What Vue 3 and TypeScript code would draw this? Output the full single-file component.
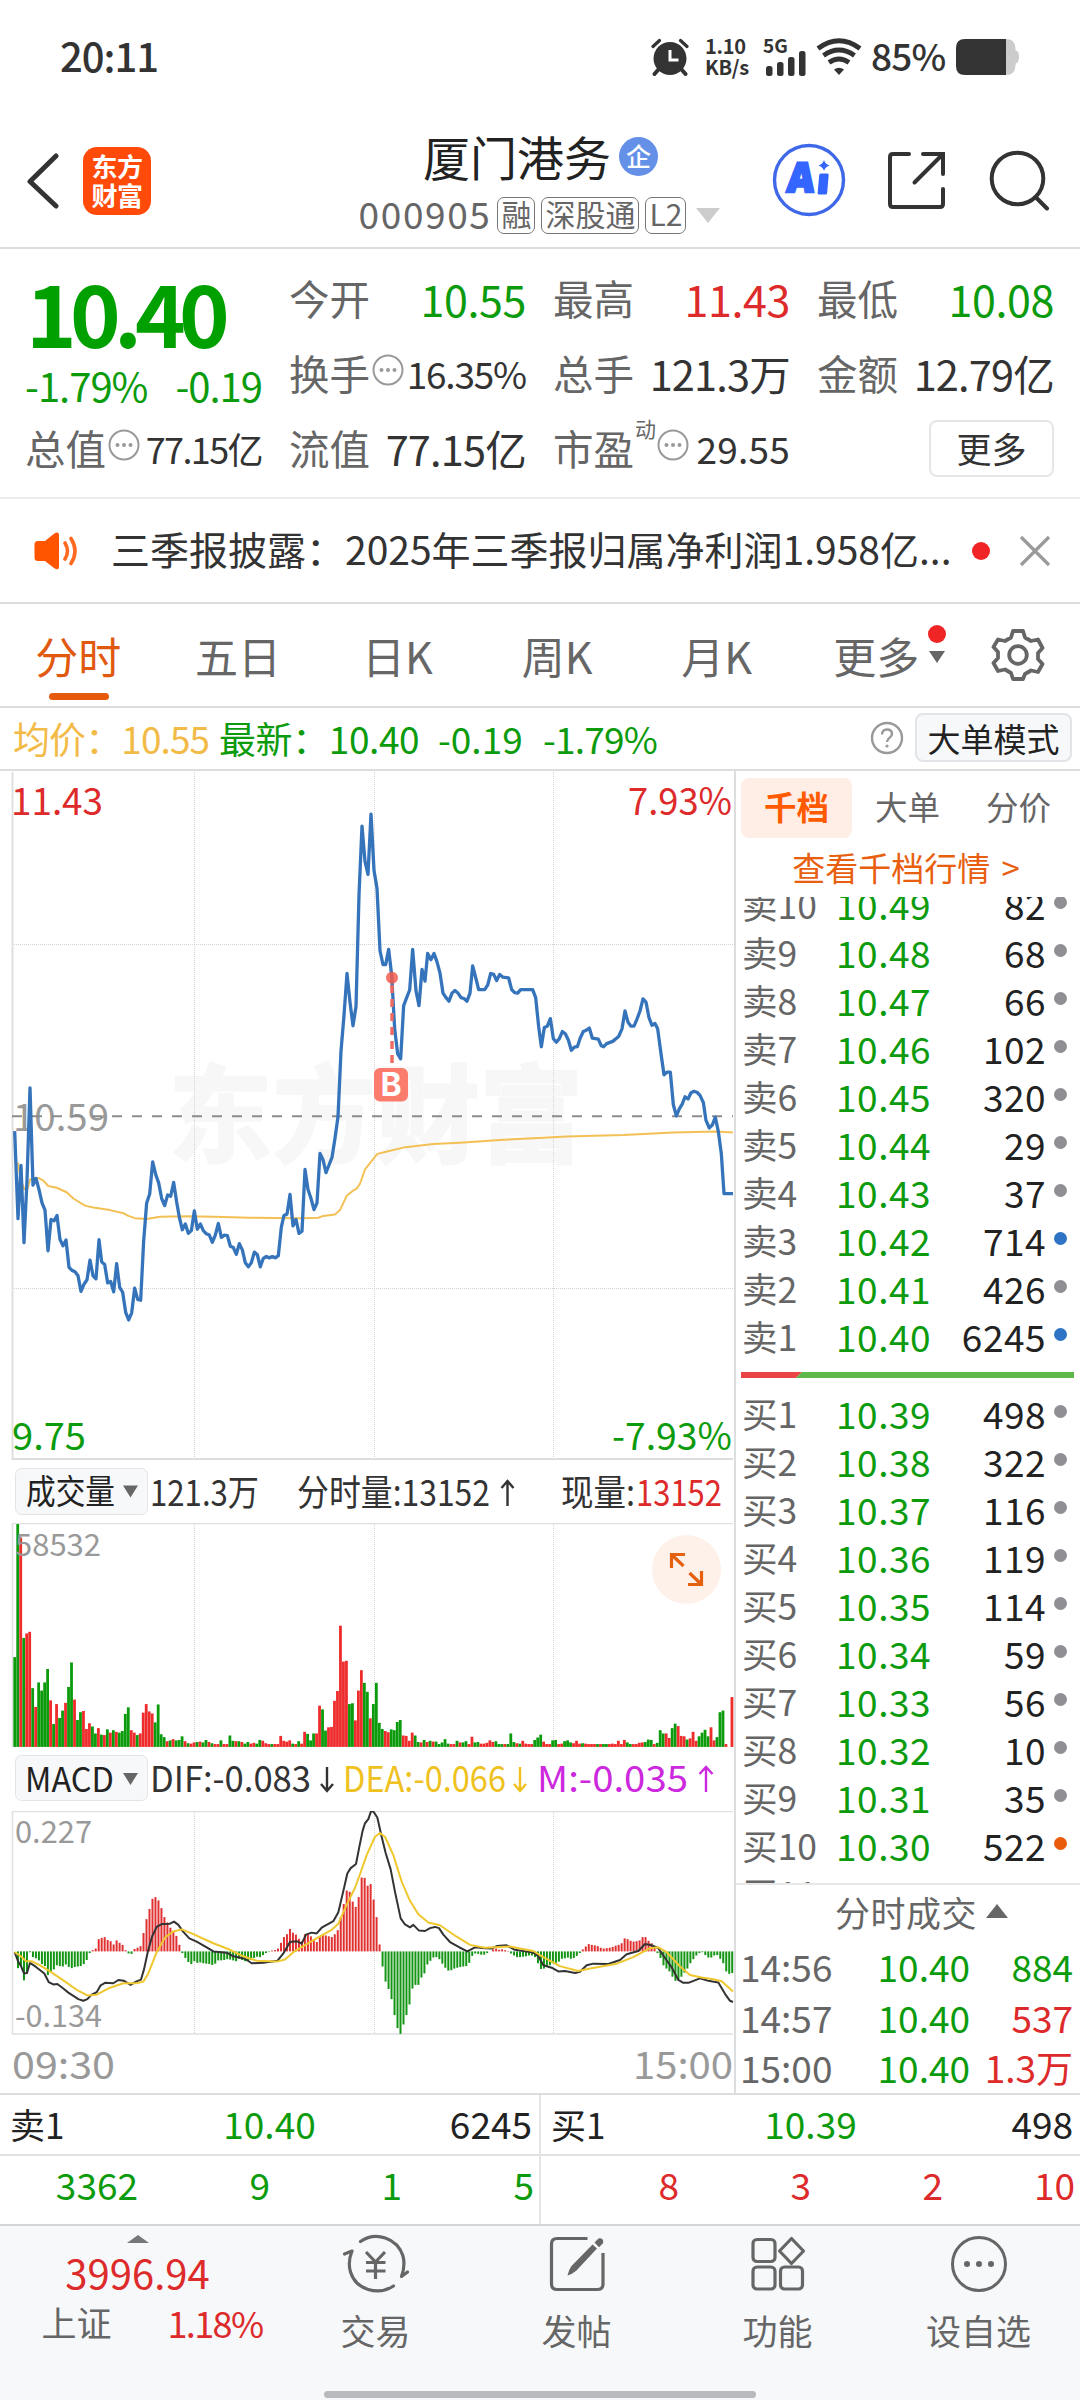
<script setup lang="ts">
interface Level { name: string; price: string; qty: string; dot: 'gray' | 'blue' | 'orange' }

const level = (name: string, price: string, qty: string, dot: Level['dot'] = 'gray'): Level => ({ name, price, qty, dot })

const asks: Level[] = [
  level('卖10', '10.49', '82'), level('卖9', '10.48', '68'), level('卖8', '10.47', '66'),
  level('卖7', '10.46', '102'), level('卖6', '10.45', '320'), level('卖5', '10.44', '29'),
  level('卖4', '10.43', '37'), level('卖3', '10.42', '714', 'blue'), level('卖2', '10.41', '426'),
  level('卖1', '10.40', '6245', 'blue'),
]
const bids: Level[] = [
  level('买1', '10.39', '498'), level('买2', '10.38', '322'), level('买3', '10.37', '116'),
  level('买4', '10.36', '119'), level('买5', '10.35', '114'), level('买6', '10.34', '59'),
  level('买7', '10.33', '56'), level('买8', '10.32', '10'), level('买9', '10.31', '35'),
  level('买10', '10.30', '522', 'orange'), level('买11', '10.29', '407'),
]
const ticks = [
  { time: '14:56', price: '10.40', qty: '884', cls: 'green' },
  { time: '14:57', price: '10.40', qty: '537', cls: 'red' },
  { time: '15:00', price: '10.40', qty: '1.3万', cls: 'red' },
]
const tabs = ['分时', '五日', '日K', '周K', '月K', '更多']
const askQueue = ['3362', '9', '1', '5']
const bidQueue = ['8', '3', '2', '10']

// Joins the morning and afternoon halves; the afternoon half is offset by 1080 units.
const join = (am: string, pm: string): string =>
  am + ' ' + pm.split(' ').map(p => { const [x, y] = p.split(','); return `${Number(x) + 1080},${y}` }).join(' ')

const pricePts = join(
  '44,829 54,1025 63,906 72,1079 81,940 90,732 99,950 108,935 117,960 126,990 135,1006 144,1097 153,1027 162,1030 171,1018 180,1072 189,1086 198,1073 207,1134 216,1141 225,1144 234,1153 243,1188 252,1172 261,1162 270,1118 279,1153 288,1160 297,1072 305,1122 314,1128 323,1169 332,1166 341,1189 350,1126 359,1179 368,1190 377,1235 386,1252 395,1236 404,1181 413,1206 422,1208 431,1075 440,990 449,970 458,898 467,926 476,945 485,980 494,996 503,972 512,975 521,944 530,988 538,1022 547,1050 556,1037 565,1058 574,1052 583,1008 592,1049 601,1037 610,1052 619,1059 628,1062 637,1078 646,1062 655,1036 664,1067 673,1062 682,1063 691,1087 700,1090 709,1105 718,1081 727,1095 736,1124 745,1133 754,1124 763,1100 772,1106 781,1133 790,1114 799,1110 808,1113 817,1110 826,1113 835,1108 844,1044 852,1018 861,1015 870,971 879,1041 888,1027 897,1058 906,1053 915,915 924,960 933,980 942,1005 951,990 960,879 969,893 978,922 987,905 996,888 1005,845 1014,797 1023,650 1032,570 1041,476 1050,540 1059,593 1068,550 1077,300 1086,146 1095,225 1104,254',
  '33,119 42,245 51,285 60,425 69,456 77,456 86,422 95,480 104,600 113,656 122,667 131,548 140,530 149,513 158,422 168,515 177,548 186,467 195,493 203,431 213,445 222,431 231,450 240,475 249,520 258,530 267,538 276,520 285,514 294,520 303,530 312,532 321,538 330,520 338,459 347,485 356,512 374,512 383,502 392,476 401,478 410,492 419,478 428,484 446,486 455,512 464,519 473,520 482,512 518,512 527,530 536,595 544,640 553,597 562,594 571,577 580,622 589,630 598,622 607,606 616,611 625,625 634,648 643,641 652,640 661,620 670,606 679,603 688,598 697,621 715,623 724,638 731,640 740,633 758,628 776,617 786,600 795,560 804,585 813,594 822,594 831,578 840,560 849,533 858,540 867,575 876,592 885,588 893,600 902,650 912,703 921,697 931,697 940,770 949,795 958,779 967,768 975,752 984,757 993,743 1002,740 1011,742 1020,749 1030,765 1038,805 1048,822 1057,815 1066,798 1075,830 1084,880 1092,969 1119,969')
const avgPts = join(
  '54,900 63,940 72,958 81,962 90,938 100,934 115,934 130,940 145,952 170,956 200,966 220,980 255,996 280,1000 330,1006 370,1013 385,1019 405,1024 440,1026 480,1021 560,1020 640,1021 750,1023 900,1024 955,1023 970,1019 1005,1016 1020,1006 1040,974 1058,963 1070,958',
  '0,947 15,915 33,898 52,880 75,876 130,866 220,858 300,855 420,849 520,845 620,841 790,838 940,832 1070,830 1119,832')
const difPts = join(
  '44,1228 54,1250 63,1262 72,1280 81,1279 90,1254 108,1264 133,1280 146,1301 160,1307 172,1306 190,1317 205,1327 220,1335 235,1343 250,1347 262,1343 275,1332 290,1326 302,1309 315,1303 340,1304 355,1296 372,1298 392,1308 408,1300 423,1295 432,1270 444,1225 456,1190 470,1166 485,1159 510,1158 522,1153 535,1161 550,1178 568,1194 590,1202 620,1216 640,1226 680,1229 700,1238 735,1244 755,1255 790,1254 832,1249 850,1231 870,1203 890,1201 905,1207 918,1185 935,1180 950,1182 965,1168 1000,1152 1015,1130 1028,1085 1042,1035 1052,1022 1068,1012 1078,970',
  '8,930 15,912 25,902 33,883 40,883 52,898 65,945 77,985 92,1025 105,1080 122,1145 135,1160 150,1167 160,1161 177,1175 195,1176 210,1169 225,1166 237,1169 250,1185 270,1203 300,1217 322,1226 345,1216 375,1218 395,1219 410,1213 440,1211 465,1222 520,1229 535,1238 550,1260 575,1266 595,1275 615,1274 645,1279 660,1276 680,1260 700,1256 745,1257 780,1247 800,1233 835,1225 855,1208 875,1211 895,1218 915,1242 935,1265 955,1296 970,1303 985,1303 1020,1292 1045,1298 1075,1302 1095,1330 1110,1347 1119,1350')
const deaPts = join(
  '44,1228 60,1236 78,1250 95,1250 120,1260 150,1275 190,1297 230,1320 262,1334 290,1332 330,1315 370,1304 410,1304 430,1300 445,1280 470,1228 495,1192 520,1177 545,1172 575,1182 640,1206 690,1222 730,1238 770,1249 830,1251 855,1246 880,1228 920,1208 960,1189 995,1173 1015,1158 1040,1112 1065,1070',
  '0,1037 20,990 45,945 60,936 75,945 100,990 125,1055 150,1102 175,1135 205,1155 240,1162 290,1190 330,1210 375,1217 450,1214 480,1219 520,1225 550,1240 600,1262 655,1274 690,1268 770,1256 820,1240 870,1218 895,1216 920,1228 960,1263 990,1284 1025,1290 1060,1294 1085,1299 1119,1324')

// One entry per trading minute: direction and top edge of the bar.
const volumes = ('g505 g179 r212 g458 r447 r443 g581 r627 g567 g587 g567 g534 r611 g669 r620 g654 g636 r617 g578 g518 r609 g659 g640 r637 r681 r667 g675 g692 r679 g695 r696 g682 r690 g684 r688 g690 g686 g644 g628 r684 r690 g696 r692 r641 r620 r638 r643 g665 g621 g694 g701 r711 g709 r706 g709 g708 g699 r711 g716 r717 r714 g713 r712 g714 g708 r713 g716 r718 r718 g709 r718 r718 g697 g710 r711 g711 r713 g717 g713 r717 r715 g717 g708 r710 r716 r718 g718 r718 r718 r698 r710 r712 r709 g717 r718 g711 r717 r688 g693 g709 g692 r692 r624 g633 g685 r677 r676 r612 r588 r428 r516 r514 g620 g618 r660 r587 r537 g568 g590 r655 g620 g568 g666 g681 r686 r689 g682 g684 g664 g659 r697 r698 r710 r690 g697 g713 r714 g708 r713 g710 r712 g712 g718 g714 g706 g717 r718 r718 g710 r714 g714 g711 r718 r700 g714 g713 r717 r717 r715 r709 r713 g711 g718 g718 r718 g718 g692 g713 r716 g717 r710 r717 r718 r718 g708 g702 g695 r712 r718 r718 g709 g708 r718 r717 g711 g709 g714 r716 r710 r717 g716 r717 r718 r718 r718 g718 r718 g718 g718 r718 r717 r718 r710 r718 r708 g714 g718 r718 r718 r715 r714 g713 g707 g708 r718 g715 g684 g692 r692 r703 g679 g668 r674 r698 r699 g707 r704 r688 r710 g699 g690 g683 g699 r677 r709 g701 g640 g636 r718 g725 r603')
  .split(' ').map((s, i) => ({ up: s[0] === 'r', x: 40 + i * 8.965, y: Number(s.slice(1)) }))

const macd = ('1267 1262 1297 1280 1228 1240 1243 1248 1257 1262 1284 1277 1270 1260 1262 1263 1258 1264 1267 1264 1263 1262 1257 1247 1230 1223 1219 1196 1193 1191 1198 1201 1209 1199 1205 1210 1223 1231 1232 1220 1217 1213 1181 1147 1122 1097 1093 1101 1120 1142 1155 1168 1177 1188 1210 1230 1242 1252 1257 1250 1254 1253 1255 1256 1257 1259 1256 1248 1248 1247 1245 1246 1248 1250 1244 1247 1250 1250 1247 1242 1239 1240 1235 1230 1227 1224 1223 1219 1205 1191 1184 1171 1180 1185 1195 1201 1184 1184 1189 1197 1203 1189 1185 1187 1189 1191 1184 1174 1142 1110 1077 1080 1104 1117 1093 1045 1046 1065 1061 1099 1142 1209 1263 1300 1318 1343 1382 1414 1428 1405 1382 1356 1317 1308 1308 1290 1280 1258 1249 1241 1240 1245 1256 1266 1273 1272 1268 1266 1264 1263 1262 1254 1237 1231 1232 1234 1234 1230 1226 1221 1219 1222 1221 1223 1225 1231 1236 1240 1240 1239 1238 1236 1236 1240 1255 1269 1268 1262 1260 1255 1254 1251 1244 1243 1241 1244 1242 1237 1230 1221 1214 1208 1210 1211 1213 1217 1219 1218 1217 1215 1212 1210 1206 1194 1196 1200 1202 1201 1199 1191 1191 1200 1206 1213 1230 1242 1260 1268 1275 1288 1298 1294 1288 1278 1268 1255 1245 1236 1230 1228 1235 1241 1241 1236 1235 1244 1255 1275 1281 1279')
  .split(' ').map((s, i) => {
    const v = Number(s)
    return { up: v < 1226, x: 51 + i * 8.965, y: Math.min(v, 1226), h: Math.abs(v - 1226) }
  })
</script>

<template>
  <div class="screen">
    <header class="status">
      <span class="clock">20:11</span>
      <svg class="s-alarm" width="38" height="38" viewBox="0 0 38 38">
        <circle cx="19" cy="20.5" r="16.5" fill="#333" />
        <path d="M2 8.500l6.500-6M36 8.500l-6.500-6" stroke="#333" stroke-width="3.200" stroke-linecap="round" />
        <path d="M7 32l-3.500 4M31 32l3.500 4" stroke="#333" stroke-width="4" stroke-linecap="round" />
        <path d="M19 12v10h8.500" fill="none" stroke="#fff" stroke-width="3" />
      </svg>
      <span class="speed">1.10<br />KB/s</span>
      <span class="cell">
        <b>5G</b>
        <svg width="41" height="25" viewBox="0 0 41 25" fill="#333">
          <rect x="0" y="15" width="6.500" height="10" rx="2.500" /><rect x="11" y="11" width="6.500" height="14" rx="2.500" />
          <rect x="22" y="6" width="6.500" height="19" rx="2.500" /><rect x="33" y="0" width="6.500" height="25" rx="2.500" />
        </svg>
      </span>
      <svg class="s-wifi" width="46" height="38" viewBox="0 0 46 38" fill="none" stroke="#333" stroke-width="4.800">
        <path d="M2 10.500Q23-5 44 10.500M7.500 17.500Q23 6.500 38.500 17.500M13 24.500Q23 17.500 33 24.500" />
        <path d="M18 31.500q5-3.500 10 0l-5 5.500z" fill="#333" stroke="none" />
      </svg>
      <span class="pct">85%</span>
      <svg width="64" height="36" viewBox="0 0 64 36">
        <path d="M9 0H50q9 0 9.500 9v2.500q3.500.5 3.500 6.500t-3.500 6.500V27q-.5 9-9.500 9H9z" fill="#ccc" />
        <path d="M9 0H50V36H9q-9 0-9-9V9q0-9 9-9z" fill="#333" />
      </svg>
    </header>

    <nav class="titlebar">
      <div class="t-left">
        <svg width="34" height="56" viewBox="0 0 34 56"><path d="M30 3L4 28.500 30 53" fill="none" stroke="#333" stroke-width="5" stroke-linecap="round" stroke-linejoin="round" /></svg>
        <div class="brand"><span>东方</span><span>财富</span></div>
      </div>
      <div class="t-mid">
        <div class="name">厦门港务<i>企</i></div>
        <div class="code"><span>000905</span><em>融</em><em>深股通</em><em>L2</em>
          <svg width="24" height="15" viewBox="0 0 24 15"><path d="M0 0h24L12 15z" fill="#ccc" /></svg>
        </div>
      </div>
      <div class="t-right">
        <svg width="74" height="74" viewBox="0 0 74 74">
          <circle cx="37" cy="37" r="34.500" fill="none" stroke="#3f68e8" stroke-width="3.400" />
          <g transform="translate(4.500 0) skewX(-5)" fill="#3466ff">
            <text x="14" y="49.500" class="ai" textLength="27" lengthAdjust="spacingAndGlyphs">A</text>
            <rect x="45.500" y="30.500" width="9.500" height="21" rx="1.500" />
          </g>
          <path d="M52 17q1.300 4.300 5.700 5.500-4.400 1.200-5.700 5.500-1.300-4.300-5.700-5.500 4.400-1.200 5.700-5.500z" fill="#3466ff" />
        </svg>
        <svg width="59" height="59" viewBox="0 0 59 59" fill="none" stroke="#333" stroke-width="4" stroke-linecap="round">
          <path d="M22 3H6Q3 3 3 6V53q0 3 3 3H53q3 0 3-3V38M36 3H56V23M55 4L27.500 31.500" />
        </svg>
        <svg width="61" height="61" viewBox="0 0 61 61" fill="none" stroke="#333" stroke-width="4" stroke-linecap="round">
          <circle cx="28.500" cy="28.500" r="25.800" /><path d="M46.500 47L58 58.500" />
        </svg>
      </div>
    </nav>

    <section class="quote">
      <div class="last">
        <strong>10.40</strong>
        <div><span>-1.79%</span><span>-0.19</span></div>
      </div>
      <div class="q"><label>今开</label><span class="v green">10.55</span></div>
      <div class="q"><label>最高</label><span class="v red">11.43</span></div>
      <div class="q"><label>最低</label><span class="v green">10.08</span></div>
      <div class="q"><label>换手</label><svg class="dots" width="32" height="32" viewBox="0 0 32 32"><circle cx="16" cy="16" r="14.500" fill="none" stroke="#999" stroke-width="2" /><g fill="#999"><circle cx="9.500" cy="16" r="2" /><circle cx="16" cy="16" r="2" /><circle cx="22.500" cy="16" r="2" /></g></svg><span class="v sm">16.35%</span></div>
      <div class="q"><label>总手</label><span class="v md">121.3万</span></div>
      <div class="q"><label>金额</label><span class="v md">12.79亿</span></div>
      <div class="q"><label>总值</label><svg class="dots" width="32" height="32" viewBox="0 0 32 32"><circle cx="16" cy="16" r="14.500" fill="none" stroke="#999" stroke-width="2" /><g fill="#999"><circle cx="9.500" cy="16" r="2" /><circle cx="16" cy="16" r="2" /><circle cx="22.500" cy="16" r="2" /></g></svg><span class="v xs">77.15亿</span></div>
      <div class="q"><label>流值</label><span class="v md">77.15亿</span></div>
      <div class="q"><label>市盈</label><sup>动</sup><svg class="dots" width="32" height="32" viewBox="0 0 32 32"><circle cx="16" cy="16" r="14.500" fill="none" stroke="#999" stroke-width="2" /><g fill="#999"><circle cx="9.500" cy="16" r="2" /><circle cx="16" cy="16" r="2" /><circle cx="22.500" cy="16" r="2" /></g></svg><span class="v pe">29.55</span></div>
      <div class="q"><button class="more">更多</button></div>
    </section>

    <section class="notice">
      <svg width="46" height="38" viewBox="0 0 46 38">
        <path d="M4 9h7L20 1.800q5-3.300 5 2V34q0 5.500-5 2L11 29H4q-3.500 0-3.500-3.500v-13Q.5 9 4 9z" fill="#ff5500" />
        <path d="M31 11q5 8 0 16M37 6.500q8 12.500 0 25" fill="none" stroke="#ff6a20" stroke-width="3.600" stroke-linecap="round" />
      </svg>
      <p>三季报披露：2025年三季报归属净利润1.958亿...</p>
      <i class="reddot"></i>
      <svg width="32" height="32" viewBox="0 0 32 32"><path d="M2 2L30 30M30 2L2 30" stroke="#999" stroke-width="3.200" /></svg>
    </section>

    <nav class="tabs">
      <div v-for="(t, i) in tabs" :key="t" class="tab" :class="{ on: i === 0 }">
        <span>{{ t }}</span>
        <span v-if="i === 5" class="flag">
          <i class="reddot"></i><svg width="16" height="12" viewBox="0 0 16 12"><path d="M0 0h16L8 12z" fill="#666" /></svg>
        </span>
      </div>
      <svg class="gear" width="54" height="54" viewBox="0 0 54 54" fill="none" stroke="#666" stroke-width="3.800" stroke-linejoin="round">
        <path d="M22 3h10l2 6.500 6 3.500 7-1.500 4.500 8.500-4.500 5v6l4.500 5-4.500 8-7-1.500-6 3.500L32 51H22l-2-6-6-3.500L7 43l-4.500-8L7 30v-6l-4.500-5L7 11.500 14 13l6-3.500z" />
        <circle cx="27" cy="27" r="8.800" />
      </svg>
    </nav>

    <div class="strip">
      <span class="avg">均价：<b>10.55</b></span>
      <span class="green newest">最新：<b>10.40</b></span>
      <span class="green chg">-0.19</span><span class="green chg2">-1.79%</span>
      <svg width="34" height="34" viewBox="0 0 34 34"><circle cx="17" cy="17" r="15" fill="none" stroke="#999" stroke-width="2.400" /><path d="M12 13.500q0-5 5-5t5 4.600c0 3.400-5 3.800-5 8" fill="none" stroke="#999" stroke-width="2.400" /><circle cx="17" cy="25" r="1.600" fill="#999" /></svg>
      <button>大单模式</button>
    </div>

    <main class="body">
      <div class="charts">
        <svg width="734" height="689" viewBox="0 770 734 689">
          <text x="169" y="1153" class="wm" textLength="414" lengthAdjust="spacingAndGlyphs">东方财富</text>
          <g stroke="#d4d4d4" stroke-width="1" stroke-dasharray="1 1">
            <path d="M194.500 771V1458M374.500 771V1458M553.500 771V1458M12 943.500H733M12 1287.500H733" fill="none" />
          </g>
          <path d="M12 1458H733M12.500 771V1459" stroke="#dcdddf" stroke-width="1.800" fill="none" />
          <g class="ax">
            <text x="13" y="1130" fill="#999" textLength="96" lengthAdjust="spacingAndGlyphs">10.59</text>
          </g>
          <path d="M12 1115.300H733" stroke="#8c8c8c" stroke-width="2" stroke-dasharray="10 10" />
          <g transform="translate(0 760) scale(.333333 .446429)" fill="none" stroke-linejoin="round">
            <polyline :points="avgPts" stroke="#f3c055" stroke-width="2" vector-effect="non-scaling-stroke" />
            <polyline :points="pricePts" stroke="#3574bb" stroke-width="3.300" vector-effect="non-scaling-stroke" />
          </g>
          <path d="M392 984V1067" stroke="#f06a60" stroke-width="3.400" stroke-dasharray="8 6" />
          <circle cx="392" cy="976.700" r="6" fill="#f55a4e" opacity=".85" />
          <rect x="374" y="1067" width="34" height="33.500" rx="6" fill="#fb7b6c" />
          <text x="391" y="1095" class="mark" text-anchor="middle">B</text>
          <g class="ax">
            <text x="11" y="813.500" fill="#dd2a2a" textLength="92" lengthAdjust="spacingAndGlyphs">11.43</text>
            <text x="12" y="1448.500" fill="#0c9b0c" textLength="74" lengthAdjust="spacingAndGlyphs">9.75</text>
            <text x="628" y="813.500" fill="#dd2a2a" textLength="104" lengthAdjust="spacingAndGlyphs">7.93%</text>
            <text x="612" y="1448.500" fill="#0c9b0c" textLength="120" lengthAdjust="spacingAndGlyphs">-7.93%</text>
          </g>
        </svg>

        <svg width="734" height="63" viewBox="0 1459 734 63">
          <rect x="15.500" y="1467.500" width="132" height="46" rx="6" fill="#f7f8fa" stroke="#e2e4e8" />
          <path d="M123 1484.500h15l-7.500 12z" fill="#666" />
          <g class="lg">
            <text x="26" y="1503" class="chip" textLength="89" lengthAdjust="spacingAndGlyphs">成交量</text>
            <text x="150" y="1504.500" textLength="109" lengthAdjust="spacingAndGlyphs">121.3万</text>
            <text x="297" y="1504.500" textLength="193" lengthAdjust="spacingAndGlyphs">分时量:13152</text>
            <text x="561" y="1504.500" textLength="74" lengthAdjust="spacingAndGlyphs">现量:</text>
            <text x="636" y="1504.500" fill="#dd2a2a" textLength="86" lengthAdjust="spacingAndGlyphs">13152</text>
          </g>
          <path d="M507.500 1505V1480M501.500 1487l6-7 6 7" fill="none" stroke="#333" stroke-width="2.400" />
        </svg>

        <svg width="734" height="224" viewBox="0 1522 734 224">
          <path d="M12.500 1746V1522.500H733" fill="none" stroke="#dfe0e2" stroke-width="1.500" />
          <path d="M194.500 1523V1746M374.500 1523V1746M553.500 1523V1746" stroke="#d4d4d4" stroke-dasharray="1 1" />
          <g transform="translate(0 1450) scale(.333333 .408163)">
            <rect v-for="(b, i) in volumes" :key="i" :x="b.x" :y="b.y" width="8.400" :height="725 - b.y" :fill="b.up ? '#ee2c2c' : '#0c9b0c'" />
          </g>
          <text x="15" y="1554.500" class="sub" textLength="86" lengthAdjust="spacingAndGlyphs">58532</text>
          <circle cx="686.500" cy="1568.500" r="34.500" fill="#fef1ea" />
          <path d="M671.500 1567V1553.500H685M672 1554l11.500 11M688 1583.500h13.500V1570M701 1583l-11.500-11" fill="none" stroke="#e5600f" stroke-width="3.200" />
        </svg>

        <svg width="734" height="64" viewBox="0 1746 734 64">
          <rect x="15.500" y="1754.500" width="132" height="45" rx="6" fill="#f7f8fa" stroke="#e2e4e8" />
          <path d="M123 1772h15l-7.500 12z" fill="#666" />
          <g class="lg">
            <text x="25" y="1790.500" class="chip" textLength="89" lengthAdjust="spacingAndGlyphs">MACD</text>
            <text x="150" y="1790.500" textLength="161" lengthAdjust="spacingAndGlyphs">DIF:-0.083</text>
            <text x="343" y="1790.500" fill="#efc11f" textLength="163" lengthAdjust="spacingAndGlyphs">DEA:-0.066</text>
            <text x="537" y="1790.500" fill="#cc28dd" textLength="151" lengthAdjust="spacingAndGlyphs">M:-0.035</text>
          </g>
          <g fill="none" stroke-width="2.400">
            <path d="M327 1766V1790M321 1783l6 7 6-7" stroke="#333" />
            <path d="M520 1766V1790M514 1783l6 7 6-7" stroke="#efc11f" />
            <path d="M706 1791V1766M699.500 1773l6.500-7 6.500 7" stroke="#cc28dd" />
          </g>
        </svg>

        <svg width="734" height="284" viewBox="0 1810 734 284">
          <path d="M12.500 2033V1810.500H733M12 2033H733" fill="none" stroke="#dfe0e2" stroke-width="1.500" />
          <path d="M194.500 1811V2032M374.500 1811V2032M553.500 1811V2032" stroke="#d4d4d4" stroke-dasharray="1 1" />
          <g class="sub">
            <text x="15" y="1841.500" textLength="77" lengthAdjust="spacingAndGlyphs">0.227</text>
            <text x="15" y="2025.500" textLength="87" lengthAdjust="spacingAndGlyphs">-0.134</text>
          </g>
          <g transform="translate(0 1450) scale(.333333 .408163)" fill="none" stroke-linejoin="round">
            <rect v-for="(b, i) in macd" :key="i" :x="b.x" :y="b.y" width="6" :height="b.h" :fill="b.up ? '#e03030' : '#149614'" />
            <polyline :points="difPts" stroke="#333" stroke-width="2" vector-effect="non-scaling-stroke" />
            <polyline :points="deaPts" stroke="#efc72e" stroke-width="2" vector-effect="non-scaling-stroke" />
          </g>
          <g class="ax" fill="#999">
            <text x="12" y="2078" textLength="103" lengthAdjust="spacingAndGlyphs">09:30</text>
            <text x="633" y="2078" textLength="100" lengthAdjust="spacingAndGlyphs">15:00</text>
          </g>
        </svg>
      </div>

      <aside class="side">
        <div class="seg"><span class="on">千档</span><span>大单</span><span>分价</span></div>
        <div class="link">查看千档行情 &gt;</div>
        <div class="book">
          <div v-for="r in asks" :key="r.name" class="lv"><span>{{ r.name }}</span><span class="p">{{ r.price }}</span><span class="n">{{ r.qty }}</span><i :class="r.dot"></i></div>
          <svg class="ratio" width="333" height="6" viewBox="0 0 333 6"><path d="M0 0H61L55 6H0z" fill="#ea4444" /><path d="M61 0H333V6H55z" fill="#5cb848" /></svg>
          <div v-for="r in bids" :key="r.name" class="lv"><span>{{ r.name }}</span><span class="p">{{ r.price }}</span><span class="n">{{ r.qty }}</span><i :class="r.dot"></i></div>
        </div>
        <div class="thead">分时成交<svg width="22" height="14" viewBox="0 0 22 14"><path d="M0 14L11 0 22 14z" fill="#666" /></svg></div>
        <div v-for="t in ticks" :key="t.time" class="tick"><span>{{ t.time }}</span><span class="p">{{ t.price }}</span><span class="n" :class="t.cls">{{ t.qty }}</span></div>
      </aside>
    </main>

    <section class="best">
      <div class="half">
        <div class="top"><span>卖1</span><span class="green">10.40</span><span>6245</span></div>
        <div class="queue green"><span v-for="(q, i) in askQueue" :key="i">{{ q }}</span></div>
      </div>
      <div class="half">
        <div class="top"><span>买1</span><span class="green">10.39</span><span>498</span></div>
        <div class="queue red"><span v-for="(q, i) in bidQueue" :key="i">{{ q }}</span></div>
      </div>
    </section>

    <footer class="dock">
      <div class="dock-row">
        <div class="index">
          <svg width="22" height="8" viewBox="0 0 22 8"><path d="M0 8L11 0 22 8z" fill="#777" /></svg>
          <b>3996.94</b>
          <div><span>上证</span><em>1.18%</em></div>
        </div>
        <div class="item">
          <svg width="66" height="60" viewBox="0 0 66 60" fill="none" stroke="#666" stroke-width="3.200" stroke-linecap="round" stroke-linejoin="round">
            <path d="M17.500 7.500C33-3 54 4 60 22q2.500 10-1.500 20.500l6-4.500M50.500 52C35 62 13 56 7.500 38q-3-10 1.500-21L1.500 20" />
            <path d="M23 18l9.500 10L42 18M32.500 28V45M23 28.500H42.500M23 37H42.500" stroke-linecap="butt" />
          </svg>
          <span>交易</span>
        </div>
        <div class="item">
          <svg width="58" height="60" viewBox="0 0 58 60" fill="none" stroke="#666" stroke-width="3.200">
            <path d="M39.500 4.500H9Q3.500 4.500 3.500 10V50q0 5.500 5.500 5.500H49.500q5.500 0 5.500-5.500V19" />
            <path d="M44.500 10.500l4.500 4L28.500 36.500q-4 3.500-9 5 1-5.500 4-9.500zM46.500 8.500l4-4q2-1 4 .8 1.500 2 .5 4l-4 4z" fill="#666" stroke="none" />
          </svg>
          <span>发帖</span>
        </div>
        <div class="item">
          <svg width="56" height="60" viewBox="0 0 56 60" fill="none" stroke="#666" stroke-width="3.200" stroke-linejoin="round">
            <rect x="3" y="5.500" width="22" height="22" rx="4" /><rect x="3" y="33" width="22" height="22" rx="4" /><rect x="30.500" y="33" width="22" height="22" rx="4" />
            <path d="M41.500 4.500L53.500 17 41.500 29.500 29.500 17z" />
          </svg>
          <span>功能</span>
        </div>
        <div class="item">
          <svg width="58" height="60" viewBox="0 0 58 60"><circle cx="29" cy="30" r="26.500" fill="none" stroke="#666" stroke-width="3" /><g fill="#666"><circle cx="17" cy="30" r="3" /><circle cx="29" cy="30" r="3" /><circle cx="41" cy="30" r="3" /></g></svg>
          <span>设自选</span>
        </div>
      </div>
      <div class="homebar"></div>
    </footer>
  </div>
</template>

<style>
body { background: #fff; }
</style>

<style scoped>
* { box-sizing: border-box; }
.screen { width: 1080px; height: 2400px; overflow: hidden; background: #fff; color: #333; font-family: "Noto Sans CJK SC", "Noto Sans", sans-serif; display: flex; flex-direction: column; white-space: nowrap; }
svg { display: block; flex: none; }
i, em { font-style: normal; }
b { font-weight: inherit; }
button { font: inherit; color: inherit; padding: 0; }
.green { color: #0c9b0c; }
.red { color: #dd2a2a; }
.reddot { display: block; width: 18px; height: 18px; border-radius: 50%; background: #f02424; }

.status { height: 113px; flex: none; display: flex; align-items: center; padding: 0 60px; }
.clock { flex: 1; font-size: 40px; font-weight: 500; letter-spacing: -1px; line-height: 60px; padding-bottom: 4px; }
.speed { margin-left: 16px; width: 44px; font-size: 20px; line-height: 21px; font-weight: 700; letter-spacing: -.3px; padding-bottom: 2px; }
.cell { margin-left: 17px; width: 41px; height: 38px; display: flex; flex-direction: column; justify-content: flex-end; position: relative; }
.cell b { position: absolute; left: -3px; top: -1px; font-size: 19px; line-height: 16px; font-weight: 700; }
.s-wifi { margin-left: 9px; }
.pct { margin: 0 9px 0 9px; width: 76px; font-size: 37px; font-weight: 500; letter-spacing: -.8px; line-height: 60px; padding-bottom: 4px; }

.titlebar { height: 136px; flex: none; border-bottom: 2px solid #dcdddf; display: flex; }
.t-left { width: 308px; height: 136px; display: flex; align-items: center; padding-left: 26px; }
.brand { width: 68px; height: 68px; margin-left: 23px; border-radius: 14px; background: #ff4a0a; color: #fff; font-weight: 700; font-size: 26px; line-height: 29px; display: flex; flex-direction: column; align-items: center; justify-content: center; padding-bottom: 3px; letter-spacing: -.5px; }
.t-mid { flex: 1; display: flex; flex-direction: column; align-items: center; }
.name { margin-top: 12px; height: 62px; line-height: 56px; font-size: 47px; color: #222; display: flex; align-items: center; padding-left: 2px; }
.name i { width: 39px; height: 39px; border-radius: 50%; background: #6590e8; color: #fff; font-size: 25px; line-height: 37px; text-align: center; margin-left: 8px; font-weight: 500; }
.code { display: flex; align-items: center; height: 56px; font-size: 37px; color: #666; letter-spacing: 1.600px; line-height: 50px; }
.code span { margin: 0 6px 4px 0; }
.code em { height: 37px; border: 1.500px solid #777; border-radius: 7px; padding: 0 3px; margin-right: 6px; font-size: 30px; line-height: 31px; letter-spacing: 0; }
.code svg { margin-left: 4px; }
.t-right { width: 309px; display: flex; align-items: center; padding-left: 1px; }
.t-right svg:nth-child(2) { margin-left: 41px; }
.t-right svg:nth-child(3) { margin-left: 43px; }
.ai { font: 800 41px "Open Sans", sans-serif; stroke: #3466ff; stroke-width: 2.500px; }

.quote { height: 250px; flex: none; border-bottom: 2px solid #ececec; display: grid; grid-template-columns: repeat(4, 237px); column-gap: 27px; grid-template-rows: repeat(3, 75px); padding: 13px 25px 0; }
.last { grid-row: span 2; color: #00a000; }
.last strong { display: block; font-size: 86px; line-height: 98px; letter-spacing: -6.800px; font-weight: 700; margin-left: 1px; }
.last div { display: flex; justify-content: space-between; font-size: 40px; line-height: 50px; letter-spacing: -1px; color: #0c9b0c; }
.q { display: flex; align-items: center; line-height: 70px; height: 72px; }
.q label { font-size: 40.500px; color: #666; }
.q .v { margin-left: auto; font-size: 43px; letter-spacing: -.4px; }
.q .md { font-size: 41.500px; letter-spacing: -.8px; }
.q .sm { font-size: 37px; letter-spacing: -1.200px; }
.q .pe { font-size: 37px; letter-spacing: .2px; }
.q .xs { font-size: 36px; letter-spacing: -1.600px; }
.dots { margin: 0 0 6px 2px; }
.q sup { font-size: 21px; line-height: 24px; align-self: flex-start; margin: 4px -1px 0 1px; color: #666; vertical-align: baseline; }
.more { margin-left: auto; width: 125px; height: 57px; border: 2px solid #e6e6e6; border-radius: 8px; background: #fff; font-size: 35px; line-height: 48px; }

.notice { height: 105px; flex: none; border-bottom: 2px solid #dcdddf; display: flex; align-items: center; padding-left: 34px; }
.notice p { margin: 0 0 5px 31px; width: 843px; font-size: 39px; line-height: 60px; }
.notice .reddot { margin: 0 29px 0 18px; }

.tabs { height: 104px; flex: none; border-bottom: 2px solid #dcdddf; display: flex; align-items: center; padding-right: 35px; }
.tab { width: 159.600px; height: 102px; display: flex; justify-content: center; position: relative; font-size: 43px; line-height: 102px; color: #666; padding-right: 3px; }
.tab.on { color: #e0590f; }
.tab.on::after { content: ""; position: absolute; left: 49px; bottom: 6px; width: 60px; height: 7px; border-radius: 4px; background: #e65a0c; }
.flag { position: absolute; left: 130px; top: 21px; display: flex; flex-direction: column; gap: 8px; align-items: center; }
.gear { margin-left: auto; }

.strip { height: 63px; flex: none; border-bottom: 2px solid #dcdddf; display: flex; align-items: center; font-size: 37px; line-height: 58px; padding: 0 8px 2px 13px; }
.avg { color: #f2bb48; width: 206px; letter-spacing: -.9px; }
.newest { width: 219px; letter-spacing: -.4px; }
.chg { width: 105px; }
.chg2 { flex: 1; letter-spacing: -.8px; }
.strip button { margin-left: 11px; width: 157px; height: 49px; border: 2px solid #e2e4e8; border-radius: 8px; background: #f7f8fa; font-size: 33px; line-height: 42px; color: #222; }

.body { height: 1324px; flex: none; display: flex; border-bottom: 2px solid #dcdddf; }
.charts { width: 734px; flex: none; }
.wm { font-size: 106px; font-weight: 700; fill: #f7f7f7; stroke: #f7f7f7; stroke-width: 3px; }
.ax { font-size: 37.500px; }
.lg { font-size: 36px; fill: #333; }
.lg .chip { font-size: 34px; fill: #222; }
.sub { font-size: 30px; fill: #999; }
.mark { font: 700 32px "Inter", sans-serif; fill: #fff; }

.side { width: 346px; border-left: 2px solid #dcdddf; display: flex; flex-direction: column; }
.seg { height: 73px; flex: none; display: flex; align-items: center; padding-left: 5px; color: #666; font-size: 32.500px; line-height: 56px; }
.seg span { width: 111px; height: 60px; text-align: center; border-radius: 8px; }
.seg .on { background: #ffeee6; color: #ff5a00; font-weight: 700; }
.link { height: 53px; flex: none; text-align: center; font-size: 33px; line-height: 47px; color: #e8600f; padding-right: 4px; word-spacing: 4px; }
.book { height: 988px; flex: none; overflow: hidden; border-bottom: 2px solid #e8e8e8; }
.lv { height: 48px; display: flex; align-items: center; font-size: 37px; line-height: 46px; letter-spacing: .5px; padding: 0 13px 2px 6px; }
.lv:first-child { margin-top: -16px; }
.lv span:first-child { width: 88px; color: #666; letter-spacing: 0; font-size: 35.500px; }
.lv .p { width: 101px; text-align: right; color: #0c9b0c; }
.lv .n { flex: 1; text-align: right; color: #222; margin-right: 8px; }
.lv i { width: 13px; height: 13px; border-radius: 50%; margin-bottom: 3px; }
.lv .gray { background: #8f8f94; }
.lv .blue { background: #2f74c4; }
.lv .orange { background: #e85d0c; }
.ratio { margin: 11px 0 12px 5px; }
.thead { height: 56px; flex: none; display: flex; align-items: center; justify-content: center; font-size: 35px; line-height: 50px; color: #666; padding: 0 0 2px 27px; letter-spacing: .5px; }
.thead svg { margin: 0 0 2px 9px; }
.tick { height: 51px; display: flex; font-size: 37px; line-height: 50px; padding: 0 7px 0 4px; color: #666; }
.tick span:first-child { width: 96px; }
.tick .p { width: 134px; text-align: right; color: #0c9b0c; }
.tick .n { flex: 1; text-align: right; }

.best { height: 131px; flex: none; display: flex; border-bottom: 2px solid #d4d6d8; }
.half { width: 541px; flex: none; border-right: 2px solid #e4e4e6; }
.half + .half { border-right: 0; width: 539px; }
.top { height: 61px; border-bottom: 2px solid #dfe0e2; display: grid; grid-template-columns: 1fr 1fr 1fr; padding: 0 7px 0 10px; font-size: 37px; line-height: 57px; color: #222; }
.top span:nth-child(1) { font-size: 35px; }
.top span:nth-child(2) { text-align: center; padding-right: 3px; }
.top .green { color: #0c9b0c; }
.top span:nth-child(3) { text-align: right; }
.queue { height: 68px; display: grid; grid-template-columns: repeat(4, 132px); padding-left: 6px; font-size: 37px; line-height: 56px; text-align: right; }

.dock { flex: 1; background: #f7f8fa; color: #666; display: flex; flex-direction: column; align-items: center; }
.dock-row { width: 1080px; height: 165px; display: flex; }
.index { width: 275px; flex: none; display: flex; flex-direction: column; align-items: center; padding-top: 9px; }
.index b { font-size: 40px; line-height: 54px; color: #dd2a2a; margin-top: 2px; }
.index div { display: flex; gap: 56px; font-size: 35px; line-height: 46px; padding-left: 29px; margin-top: 0; }
.index em { color: #dd2a2a; font-size: 36px; letter-spacing: -1.600px; }
.item { width: 201px; flex: none; display: flex; flex-direction: column; align-items: center; padding-top: 8px; }
.item span { font-size: 35px; line-height: 50px; margin-top: 11px; }
.homebar { width: 432px; height: 7px; border-radius: 4px; background: #b9babd; }
</style>
